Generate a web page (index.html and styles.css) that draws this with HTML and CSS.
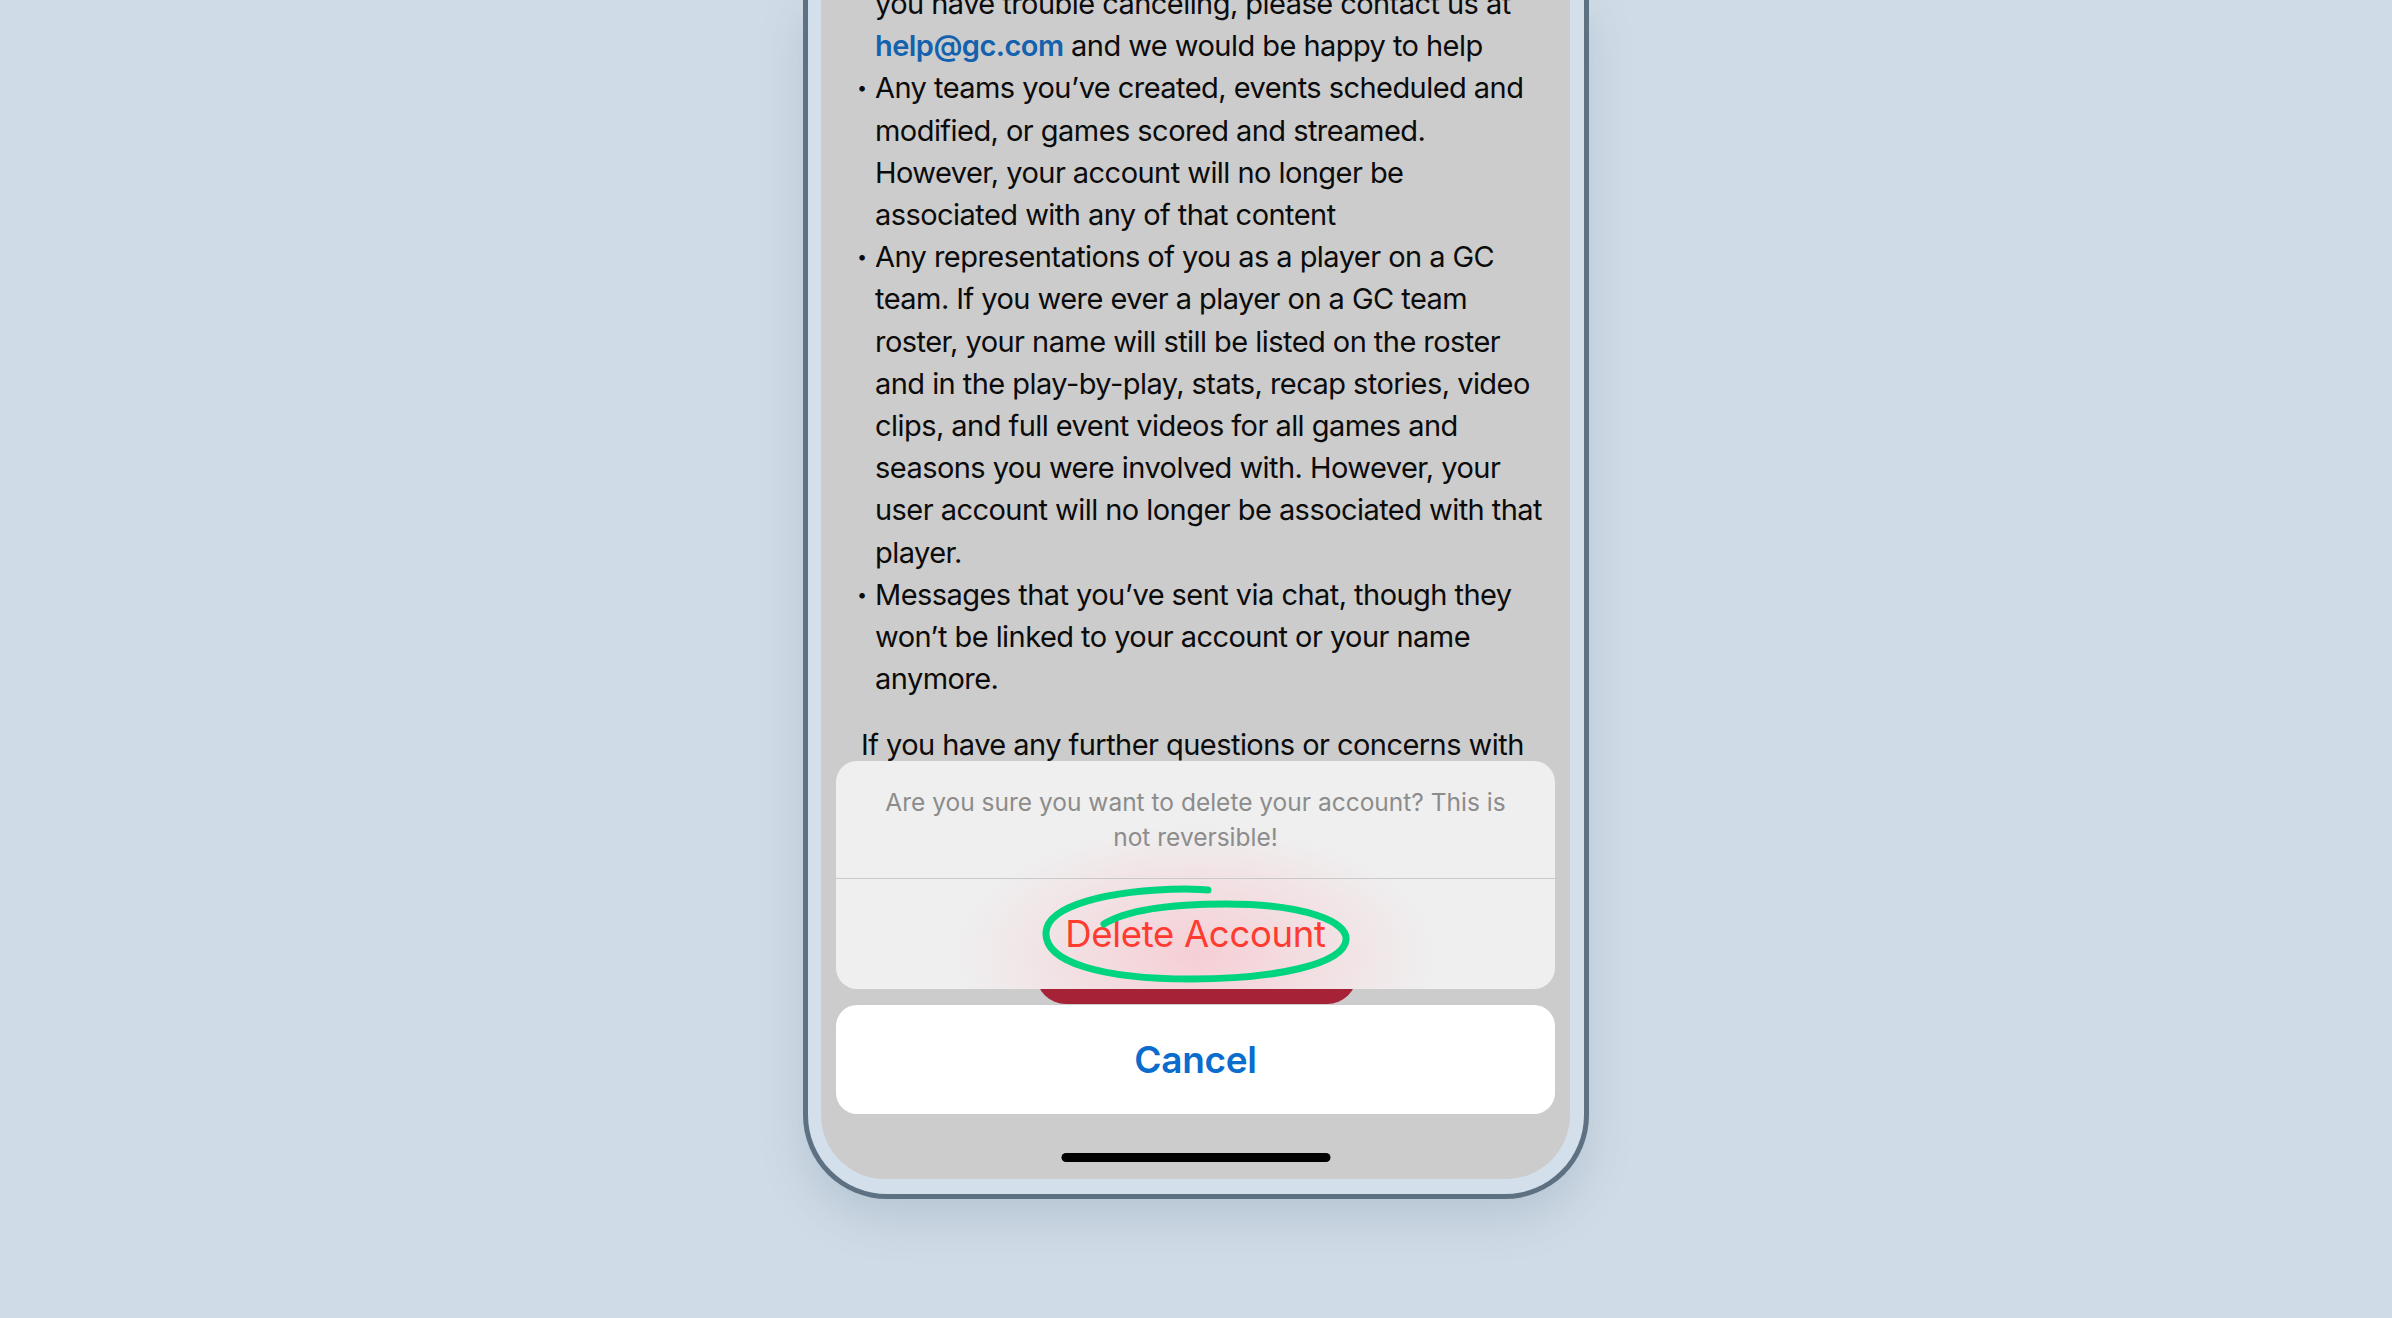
FILE: index.html
```html
<!DOCTYPE html>
<html lang="en">
<head>
<meta charset="utf-8">
<title>Delete Account</title>
<link rel="stylesheet" href="styles.css">
</head>
<body>
<div class="stage">
  <div class="phone">
    <div class="screen">
      <div class="content">
        <ul class="list">
          <li class="cont">you have trouble canceling, please contact us at<br><a class="link">help@gc.com</a> and we would be happy to help</li>
          <li>Any teams you’ve created, events scheduled and<br>modified, or games scored and streamed.<br>However, your account will no longer be<br>associated with any of that content</li>
          <li>Any representations of you as a player on a GC<br>team. If you were ever a player on a GC team<br>roster, your name will still be listed on the roster<br>and in the play-by-play, stats, recap stories, video<br>clips, and full event videos for all games and<br>seasons you were involved with. However, your<br>user account will no longer be associated with that<br>player.</li>
          <li>Messages that you’ve sent via chat, though they<br>won’t be linked to your account or your name<br>anymore.</li>
        </ul>
        <p class="para">If you have any further questions or concerns with</p>
      </div>
      <div class="behind-btn"></div>
      <div class="sheet">
        <div class="group main">
          <div class="message">Are you sure you want to delete your account? This is<br>not reversible!</div>
          <div class="action">
            <span class="destructive">Delete Account</span>
            <svg class="scribble" viewBox="-170 -60 340 120" width="340" height="120" aria-hidden="true">
              <path d="M -92 -10 C -66 -26 -20 -30 30 -30 C 110 -30 152 -12 150 6 C 148 30 80 45 -5 45 C -95 45 -152 28 -150 -2 C -148 -28 -90 -44 -10 -45 C 0 -45 6 -44 12 -44" fill="none" stroke="#00d47f" stroke-width="7" stroke-linecap="round"/>
            </svg>
          </div>
        </div>
        <div class="group cancel">
          <span class="cancel-label">Cancel</span>
        </div>
      </div>
      <div class="home-indicator"></div>
    </div>
  </div>
</div>
</body>
</html>
```

FILE: styles.css
```css
html, body {
  margin: 0;
  padding: 0;
  height: 100%;
}
body {
  background: #cfdbe6;
  font-family: Inter, "Noto Sans", "Liberation Sans", sans-serif;
  overflow: hidden;
}
.stage {
  display: flex;
  justify-content: center;
  height: 1318px;
}
.phone {
  width: 786px;
  height: 1199px;
  box-sizing: border-box;
  border: 5px solid #5d7182;
  border-top: none;
  border-radius: 0 0 84px 84px;
  padding: 0 14px 15px 13px;
  background: #d3dfea;
  display: flex;
  flex-direction: column;
  box-shadow: 0 20px 40px rgba(120, 140, 165, 0.25);
}
.screen {
  position: relative;
  flex: 1;
  background: #cccccc;
  border-radius: 0 0 64px 64px;
  overflow: hidden;
}
.content {
  margin-top: -17px;
  padding-left: 40px;
  color: #0b0b0b;
  font-size: 29px;
  line-height: 42.2px;
  letter-spacing: -0.55px;
}
.list {
  list-style: none;
  margin: 0;
  padding: 0;
}
.list li {
  position: relative;
  padding-left: 14px;
  white-space: nowrap;
}
.list li::before {
  content: "•";
  position: absolute;
  left: -4px;
  font-size: 18px;
  top: 0;
}
.list li.cont::before {
  content: none;
}
.link {
  color: #1462ad;
  font-weight: 600;
}
.para {
  margin: 24px 0 0;
  white-space: nowrap;
}
.behind-btn {
  position: absolute;
  left: 215px;
  width: 321px;
  top: 920px;
  height: 84px;
  background: #a52237;
  border-radius: 30px;
}
.sheet {
  position: absolute;
  left: 15px;
  right: 15px;
  bottom: 65px;
  display: flex;
  flex-direction: column;
  gap: 16px;
}
.group {
  border-radius: 21px;
  overflow: hidden;
}
.main {
  background:
    radial-gradient(ellipse 240px 130px at 50% 85%, rgba(246, 205, 212, 0.95), rgba(246, 205, 212, 0) 100%),
    #efefef;
}
.message {
  height: 118px;
  box-sizing: border-box;
  padding-top: 24px;
  text-align: center;
  color: #8c8c8c;
  font-size: 24.5px;
  line-height: 35px;
  letter-spacing: 0;
  border-bottom: 1.5px solid #c9c9c9;
}
.action {
  position: relative;
  height: 110px;
  display: flex;
  align-items: center;
  justify-content: center;
}
.destructive {
  color: #ff3b30;
  font-size: 36.5px;
  letter-spacing: -0.3px;
}
.scribble {
  position: absolute;
  left: 50%;
  top: 50%;
  transform: translate(-50%, -50%);
}
.cancel {
  background: #ffffff;
  height: 109px;
  display: flex;
  align-items: center;
  justify-content: center;
}
.cancel-label {
  color: #0a6ccd;
  font-size: 37px;
  font-weight: 600;
  letter-spacing: -0.3px;
}
.home-indicator {
  position: absolute;
  bottom: 17px;
  left: 50%;
  transform: translateX(-50%);
  width: 269px;
  height: 9px;
  border-radius: 5px;
  background: #000;
}
```
